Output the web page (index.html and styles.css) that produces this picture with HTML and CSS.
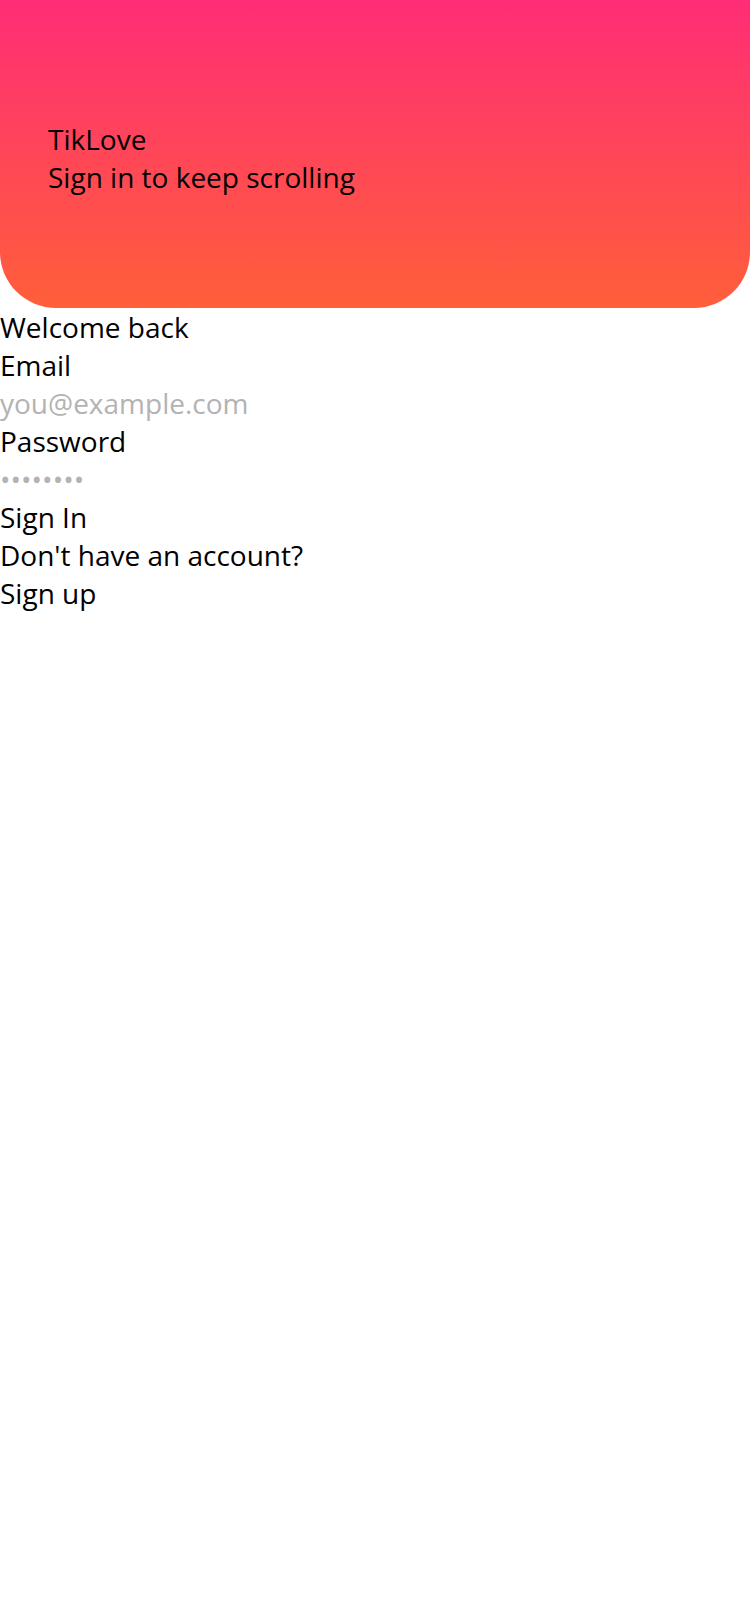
FILE: index.html
```html
<html>
<head>
<title>TikLove</title>
<link rel="stylesheet" href="styles.css">
</head>
<body>
<div class="screen">
  <div class="hero">
    <div class="brand">TikLove</div>
    <div class="tagline">Sign in to keep scrolling</div>
  </div>
  <div class="form">
    <div class="title">Welcome back</div>
    <label class="label" for="email">Email</label>
    <input class="field" id="email" type="email" placeholder="you@example.com">
    <label class="label" for="pass">Password</label>
    <input class="field" id="pass" type="password" placeholder="&#8226;&#8226;&#8226;&#8226;&#8226;&#8226;&#8226;&#8226;">
    <button class="btn" type="button">Sign In</button>
    <div class="switch">Don't have an account?</div>
    <a class="link" href="#">Sign up</a>
  </div>
</div>
</body>
</html>
```
FILE: styles.css
```css
body { margin:0; background:#fff; color:#000; font-family:"Open Sans", "Noto Sans", sans-serif; font-size:28px; line-height:normal; }
.screen { display:flex; flex-direction:column; }
.hero { height:308px; box-sizing:border-box; padding:120px 48px 0; background:linear-gradient(180deg, #ff2d76 0%, #ff5f3a 100%); border-radius:0 0 56px 56px; }
.brand, .tagline { height:38px; }
.form { display:flex; flex-direction:column; align-items:flex-start; }
.title, .label, .switch, .link { height:38px; }
.field { font:inherit; color:#000; border:none; outline:none; background:transparent; padding:0; margin:0; height:38px; width:100%; }
.field::placeholder { color:#b3b3b3; }
.btn { font:inherit; color:#000; border:none; background:transparent; padding:0; margin:0; height:38px; text-align:left; }
.link { color:#000; text-decoration:none; }
```
